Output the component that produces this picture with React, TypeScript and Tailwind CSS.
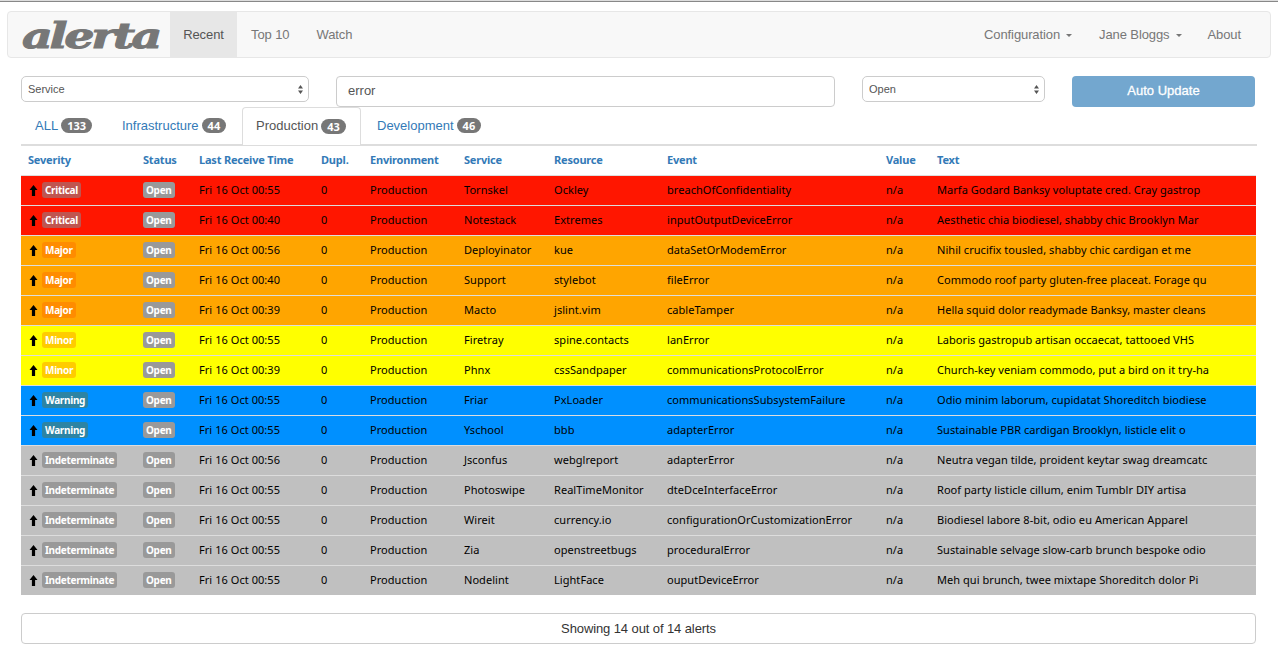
const rows = [
  ["Critical", "Fri 16 Oct 00:55", "Tornskel", "Ockley", "breachOfConfidentiality", "Marfa Godard Banksy voluptate cred. Cray gastrop"],
  ["Critical", "Fri 16 Oct 00:40", "Notestack", "Extremes", "inputOutputDeviceError", "Aesthetic chia biodiesel, shabby chic Brooklyn Mar"],
  ["Major", "Fri 16 Oct 00:56", "Deployinator", "kue", "dataSetOrModemError", "Nihil crucifix tousled, shabby chic cardigan et me"],
  ["Major", "Fri 16 Oct 00:40", "Support", "stylebot", "fileError", "Commodo roof party gluten-free placeat. Forage qu"],
  ["Major", "Fri 16 Oct 00:39", "Macto", "jslint.vim", "cableTamper", "Hella squid dolor readymade Banksy, master cleans"],
  ["Minor", "Fri 16 Oct 00:55", "Firetray", "spine.contacts", "lanError", "Laboris gastropub artisan occaecat, tattooed VHS"],
  ["Minor", "Fri 16 Oct 00:39", "Phnx", "cssSandpaper", "communicationsProtocolError", "Church-key veniam commodo, put a bird on it try-ha"],
  ["Warning", "Fri 16 Oct 00:55", "Friar", "PxLoader", "communicationsSubsystemFailure", "Odio minim laborum, cupidatat Shoreditch biodiese"],
  ["Warning", "Fri 16 Oct 00:55", "Yschool", "bbb", "adapterError", "Sustainable PBR cardigan Brooklyn, listicle elit o"],
  ["Indeterminate", "Fri 16 Oct 00:56", "Jsconfus", "webglreport", "adapterError", "Neutra vegan tilde, proident keytar swag dreamcatc"],
  ["Indeterminate", "Fri 16 Oct 00:55", "Photoswipe", "RealTimeMonitor", "dteDceInterfaceError", "Roof party listicle cillum, enim Tumblr DIY artisa"],
  ["Indeterminate", "Fri 16 Oct 00:55", "Wireit", "currency.io", "configurationOrCustomizationError", "Biodiesel labore 8-bit, odio eu American Apparel"],
  ["Indeterminate", "Fri 16 Oct 00:55", "Zia", "openstreetbugs", "proceduralError", "Sustainable selvage slow-carb brunch bespoke odio"],
  ["Indeterminate", "Fri 16 Oct 00:55", "Nodelint", "LightFace", "ouputDeviceError", "Meh qui brunch, twee mixtape Shoreditch dolor Pi"],
];

const rowColor: Record<string, string> = {
  Critical: "bg-[#ff1600]",
  Major: "bg-[#ffa500]",
  Minor: "bg-[#ffff00]",
  Warning: "bg-[#0090ff]",
  Indeterminate: "bg-[#c0c0c0]",
};

const labelColor: Record<string, string> = {
  Critical: "bg-[#bf5550]",
  Major: "bg-[#ff8c00]",
  Minor: "bg-[#ffcc00]",
  Warning: "bg-[#2d84a4]",
  Indeterminate: "bg-[#999999]",
};

const cols = [
  ["Severity", "w-[115px]"],
  ["Status", "w-[56px]"],
  ["Last Receive Time", "w-[122px]"],
  ["Dupl.", "w-[49px]"],
  ["Environment", "w-[94px]"],
  ["Service", "w-[90px]"],
  ["Resource", "w-[113px]"],
  ["Event", "w-[219px]"],
  ["Value", "w-[51px]"],
  ["Text", ""],
];

function Arrows() {
  return (
    <svg viewBox="0 0 5 9" className="absolute right-[6px] top-[9px] h-[9px] w-[5px] fill-[#555]">
      <path d="M2.5 0 5 3.6H0zM2.5 9 0 5.4h5z" />
    </svg>
  );
}

function Select({ value, className }: { value: string; className: string }) {
  return (
    <div className={`relative ${className}`}>
      <select className="h-[26px] w-full appearance-none rounded-[5px] border border-[#ccc] bg-white pl-[6px] text-[11px] text-[#555]">
        <option>{value}</option>
      </select>
      <Arrows />
    </div>
  );
}

function Caret() {
  return <span className="ml-[6px] inline-block border-x-[3px] border-t-[3px] border-x-transparent border-t-[#777] align-middle" />;
}

function Tab({ label, count, active, className }: { label: string; count: number; active?: boolean; className: string }) {
  return (
    <div
      className={`flex items-center ${className} ${
        active ? "-mb-[1px] h-[38px] rounded-t-[4px] border border-b-0 border-[#ddd] bg-white pb-[1px] text-[#555]" : "h-[37px] text-[#337ab7]"
      }`}
    >
      {label}
      <span className="ml-[3px] rounded-[10px] bg-[#777] px-[6px] py-[1px] font-['Noto_Sans',sans-serif] text-[11px] leading-[13px] font-bold text-white">
        {count}
      </span>
    </div>
  );
}

export default function App() {
  return (
    <div className="min-h-[651px] bg-white font-['Liberation_Sans',Arial,sans-serif] text-[13px] text-[#333]">
      <div className="h-[2px] border-b border-[#888] bg-[#ddd]" />
      <div className="px-[7px] pt-[9px]">
        <nav className="flex h-[47px] items-stretch justify-between rounded-[4px] border border-[#e7e7e7] bg-[#f8f8f8] tracking-[-0.1px] text-[#777]">
          <div className="flex items-stretch">
            <div className="flex w-[162px] items-center overflow-hidden pl-[14px]">
              <span className="inline-block origin-left scale-x-[1.32] font-['DejaVu_Serif',serif] text-[36px] leading-none font-bold tracking-[-2.5px] text-[#777] italic [-webkit-text-stroke:1px_#777]">
                alerta
              </span>
            </div>
            <div className="flex w-[67px] items-center justify-center bg-[#e7e7e7] text-[#555]">Recent</div>
            <div className="flex items-center px-[14px]">Top 10</div>
            <div className="flex items-center px-[13px]">Watch</div>
          </div>
          <div className="flex items-center pr-[29px]">
            <span>Configuration<Caret /></span>
            <span className="ml-[27px]">Jane Bloggs<Caret /></span>
            <span className="ml-[26px]">About</span>
          </div>
        </nav>
      </div>

      <div className="px-[21px]">
        <div className="mt-[18px] flex items-start">
          <Select value="Service" className="w-[288px]" />
          <div className="ml-[27px] flex h-[31px] w-[499px] items-center rounded-[4px] border border-[#ccc] px-[11px] pb-[2px] text-[13px] text-[#555]">
            error
          </div>
          <Select value="Open" className="ml-[27px] w-[183px]" />
          <button className="ml-[27px] h-[31px] w-[183px] rounded-[4px] bg-[#73a7cf] pb-[2px] text-[13px] text-white [-webkit-text-stroke:0.3px_white]">
            Auto Update
          </button>
        </div>

        <div className="flex border-b-2 border-[#ddd]">
          <Tab label="ALL" count={133} className="w-[87px] pl-[14px]" />
          <Tab label="Infrastructure" count={44} className="w-[134px] pl-[14px]" />
          <Tab label="Production" count={43} active className="w-[119px] pl-[13px]" />
          <Tab label="Development" count={46} className="pl-[16px]" />
        </div>

        <table className="w-[1235px] table-fixed border-collapse font-['Noto_Sans',sans-serif] text-[11px] tracking-[0.05px] text-black">
          <thead>
            <tr className="h-[29px] text-left">
              {cols.map(([name, w]) => (
                <th key={name} className={`${w} pl-[7px] font-bold tracking-[-0.2px] whitespace-nowrap text-[#337ab7]`}>
                  {name}
                </th>
              ))}
            </tr>
          </thead>
          <tbody>
            {rows.map((r, i) => (
              <tr key={i} className={`h-[30px] border-t border-[#ddd] ${rowColor[r[0]]}`}>
                <td className="pl-[8px] whitespace-nowrap">
                  <span className="flex items-center">
                    <svg viewBox="0 0 9 11" className="h-[11px] w-[9px] fill-black">
                      <path d="M4.5 0 8.5 5H6.1V11H2.9V5H.5z" />
                    </svg>
                    <span className={`ml-[4px] rounded-[3px] px-[3px] py-[1px] text-[10px] leading-[14px] font-bold tracking-[-0.3px] text-white ${labelColor[r[0]]}`}>
                      {r[0]}
                    </span>
                  </span>
                </td>
                <td className="pl-[7px]">
                  <span className="rounded-[3px] bg-[#999] px-[3px] py-[1px] text-[10px] leading-[14px] font-bold tracking-[-0.3px] text-white">Open</span>
                </td>
                <td className="pl-[7px] whitespace-nowrap">{r[1]}</td>
                <td className="pl-[7px]">0</td>
                <td className="pl-[7px]">Production</td>
                <td className="pl-[7px] whitespace-nowrap">{r[2]}</td>
                <td className="pl-[7px] whitespace-nowrap">{r[3]}</td>
                <td className="pl-[7px] whitespace-nowrap">{r[4]}</td>
                <td className="pl-[7px]">n/a</td>
                <td className="overflow-hidden pl-[7px] whitespace-nowrap">{r[5]}</td>
              </tr>
            ))}
          </tbody>
        </table>

        <div className="mt-[18px] flex h-[31px] w-[1235px] items-center justify-center rounded-[4px] border border-[#ccc] text-[13px] tracking-[-0.1px] text-[#333]">
          Showing 14 out of 14 alerts
        </div>
      </div>
    </div>
  );
}
